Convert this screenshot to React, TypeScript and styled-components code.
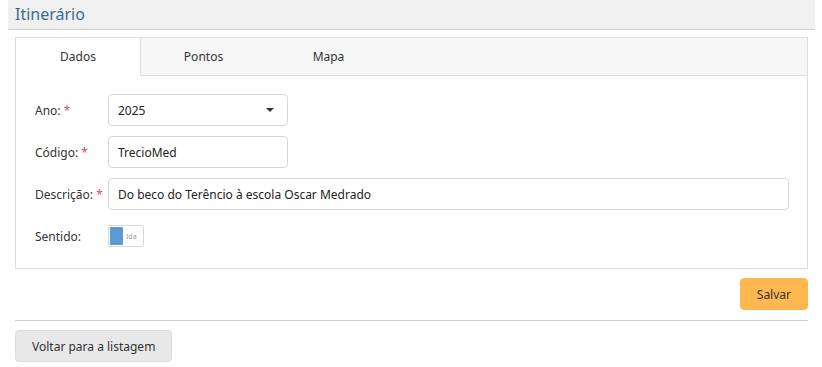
import React from "react";
import styled, { createGlobalStyle } from "styled-components";

const GlobalStyle = createGlobalStyle`
  html, body {
    margin: 0;
    padding: 0;
    background: #fff;
  }
  body {
    font-family: "Noto Sans", "Open Sans", sans-serif;
    font-size: 12px;
    color: #333;
  }
  * { box-sizing: border-box; }
`;

const Page = styled.div`
  padding: 0 7px 0 8px;
`;

const Header = styled.div`
  height: 30px;
  background: #f0f0f0;
  border-bottom: 1px solid #cfcfcf;
  display: flex;
  align-items: center;
  padding-left: 7px;
`;

const Title = styled.h1`
  margin: 0 0 2px;
  font-size: 16px;
  font-weight: 400;
  color: #3d6a8e;
`;

const Content = styled.div`
  padding: 7px 7px 0 7px;
`;

const TabBox = styled.div`
  border: 1px solid #dcdcdc;
`;

const TabBar = styled.div`
  display: flex;
  height: 38px;
  background: #f7f7f7;
`;

const Tab = styled.div<{ $active?: boolean }>`
  width: 125px;
  display: flex;
  align-items: center;
  justify-content: center;
  background: ${({ $active }) => ($active ? "#fff" : "transparent")};
  border-right: ${({ $active }) => ($active ? "1px solid #dcdcdc" : "none")};
  border-bottom: 1px solid ${({ $active }) => ($active ? "#fff" : "#dcdcdc")};
  color: #333;
`;

const TabFill = styled.div`
  flex: 1;
  border-bottom: 1px solid #dcdcdc;
`;

const FormBody = styled.div`
  padding: 18px 18px 21px 19px;
  display: flex;
  flex-direction: column;
  gap: 10px;
`;

const Row = styled.div`
  display: flex;
  align-items: center;
`;

const Label = styled.label`
  width: 73px;
  flex-shrink: 0;
  color: #333;
  white-space: nowrap;
`;

const Req = styled.span`
  color: #e0457b;
`;

const Field = styled.div<{ $width?: string }>`
  width: ${({ $width }) => $width || "auto"};
  flex: ${({ $width }) => ($width ? "none" : "1")};
  height: 32px;
  border: 1px solid #d6d6d6;
  border-radius: 4px;
  display: flex;
  align-items: center;
  justify-content: space-between;
  padding: 0 13px 0 9px;
  color: #222;
  background: #fff;
`;

const Caret = styled.span`
  width: 0;
  height: 0;
  border-left: 4px solid transparent;
  border-right: 4px solid transparent;
  border-top: 4px solid #333;
`;

const SwitchRow = styled(Row)`
  margin-top: 5px;
`;

const Toggle = styled.div`
  width: 36px;
  height: 22px;
  border: 1px solid #d9d9d9;
  border-radius: 2px;
  display: flex;
  align-items: center;
  gap: 3px;
  padding: 1px;
`;

const Knob = styled.div`
  width: 13px;
  height: 18px;
  background: #5b9bd5;
  border-radius: 1px;
`;

const ToggleText = styled.span`
  font-size: 7px;
  color: #999;
`;

const Actions = styled.div`
  display: flex;
  justify-content: flex-end;
  padding: 9px 0 10px;
  border-bottom: 1px solid #cfcfcf;
`;

const Button = styled.button<{ $variant?: "warning" | "default" }>`
  font-family: inherit;
  font-size: 12px;
  height: 32px;
  border-radius: 4px;
  padding: 0 16px;
  color: #333;
  cursor: pointer;
  background: ${({ $variant }) => ($variant === "warning" ? "#ffb84f" : "#e8e8e8")};
  border: 1px solid ${({ $variant }) => ($variant === "warning" ? "#ffb84f" : "#dcdcdc")};
`;

const Footer = styled.div`
  padding-top: 9px;
`;

export default function App() {
  return (
    <>
      <GlobalStyle />
      <Page>
        <Header>
          <Title>Itinerário</Title>
        </Header>
        <Content>
          <TabBox>
            <TabBar>
              <Tab $active>Dados</Tab>
              <Tab>Pontos</Tab>
              <Tab>Mapa</Tab>
              <TabFill />
            </TabBar>
            <FormBody>
              <Row>
                <Label>
                  Ano: <Req>*</Req>
                </Label>
                <Field $width="180px">
                  <span>2025</span>
                  <Caret />
                </Field>
              </Row>
              <Row>
                <Label>
                  Código: <Req>*</Req>
                </Label>
                <Field $width="180px">TrecioMed</Field>
              </Row>
              <Row>
                <Label>
                  Descrição: <Req>*</Req>
                </Label>
                <Field>Do beco do Terêncio à escola Oscar Medrado</Field>
              </Row>
              <SwitchRow>
                <Label>Sentido:</Label>
                <Toggle>
                  <Knob />
                  <ToggleText>Ida</ToggleText>
                </Toggle>
              </SwitchRow>
            </FormBody>
          </TabBox>
          <Actions>
            <Button $variant="warning">Salvar</Button>
          </Actions>
          <Footer>
            <Button>Voltar para a listagem</Button>
          </Footer>
        </Content>
      </Page>
    </>
  );
}
